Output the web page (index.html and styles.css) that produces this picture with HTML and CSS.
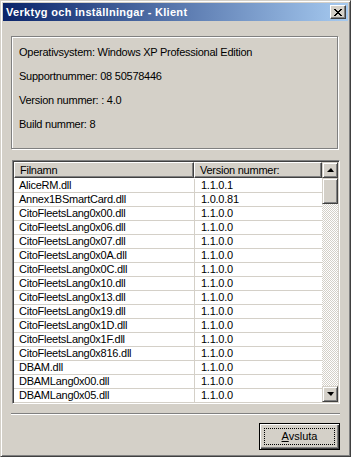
FILE: index.html
```html
<!DOCTYPE html>
<html lang="sv">
<head>
  <meta charset="utf-8">
  <title>Verktyg och inställningar - Klient</title>
  <link rel="stylesheet" href="styles.css">
</head>
<body>
  <div class="window">
    <div class="titlebar">
      <span class="title">Verktyg och inställningar - Klient</span>
      <button class="close" type="button">
        <svg width="8" height="7" viewBox="0 0 8 7">
          <path d="M0 0h2v1H0zM6 0h2v1H6zM1 1h2v1H1zM5 1h2v1H5zM2 2h4v1H2zM3 3h2v1H3zM2 4h4v1H2zM1 5h2v1H1zM5 5h2v1H5zM0 6h2v1H0zM6 6h2v1H6z" fill="#000"/>
        </svg>
      </button>
    </div>
    <div class="content">
      <div class="info">
        <p>Operativsystem: Windows XP Professional Edition</p>
        <p>Supportnummer: 08 50578446</p>
        <p>Version nummer: : 4.0</p>
        <p>Build nummer: 8</p>
      </div>

      <div class="listview">
        <div class="grid">
          <div class="head">
            <div class="col name">Filnamn</div>
            <div class="col ver">Version nummer:</div>
          </div>
          <div class="row"><div class="cell name">AliceRM.dll</div><div class="cell ver">1.1.0.1</div></div>
          <div class="row"><div class="cell name">Annex1BSmartCard.dll</div><div class="cell ver">1.0.0.81</div></div>
          <div class="row"><div class="cell name">CitoFleetsLang0x00.dll</div><div class="cell ver">1.1.0.0</div></div>
          <div class="row"><div class="cell name">CitoFleetsLang0x06.dll</div><div class="cell ver">1.1.0.0</div></div>
          <div class="row"><div class="cell name">CitoFleetsLang0x07.dll</div><div class="cell ver">1.1.0.0</div></div>
          <div class="row"><div class="cell name">CitoFleetsLang0x0A.dll</div><div class="cell ver">1.1.0.0</div></div>
          <div class="row"><div class="cell name">CitoFleetsLang0x0C.dll</div><div class="cell ver">1.1.0.0</div></div>
          <div class="row"><div class="cell name">CitoFleetsLang0x10.dll</div><div class="cell ver">1.1.0.0</div></div>
          <div class="row"><div class="cell name">CitoFleetsLang0x13.dll</div><div class="cell ver">1.1.0.0</div></div>
          <div class="row"><div class="cell name">CitoFleetsLang0x19.dll</div><div class="cell ver">1.1.0.0</div></div>
          <div class="row"><div class="cell name">CitoFleetsLang0x1D.dll</div><div class="cell ver">1.1.0.0</div></div>
          <div class="row"><div class="cell name">CitoFleetsLang0x1F.dll</div><div class="cell ver">1.1.0.0</div></div>
          <div class="row"><div class="cell name">CitoFleetsLang0x816.dll</div><div class="cell ver">1.1.0.0</div></div>
          <div class="row"><div class="cell name">DBAM.dll</div><div class="cell ver">1.1.0.0</div></div>
          <div class="row"><div class="cell name">DBAMLang0x00.dll</div><div class="cell ver">1.1.0.0</div></div>
          <div class="row"><div class="cell name">DBAMLang0x05.dll</div><div class="cell ver">1.1.0.0</div></div>
        </div>
        <div class="scrollbar">
          <div class="sbtn"><span class="arrow up"></span></div>
          <div class="thumb"></div>
          <div class="track"></div>
          <div class="sbtn"><span class="arrow down"></span></div>
        </div>
      </div>

      <div class="separator"></div>

      <div class="footer">
        <button class="btn" type="button"><span class="focus"><u>A</u>vsluta</span></button>
      </div>
    </div>
  </div>
</body>
</html>
```

FILE: styles.css
```css
body {
  margin: 0;
  font-family: "Liberation Sans", Arial, sans-serif;
  font-size: 11px;
  letter-spacing: -0.25px;
  color: #000;
}
.window {
  box-sizing: border-box;
  width: 351px;
  height: 457px;
  background: #d4d0c8;
  border: 1px solid;
  border-color: #d4d0c8 #404040 #404040 #d4d0c8;
  box-shadow: inset 1px 1px 0 #fff, inset -1px -1px 0 #808080;
  padding: 2px;
  display: flex;
  flex-direction: column;
}
.titlebar {
  height: 18px;
  background: linear-gradient(to right, #0a246a, #a6caf0);
  display: flex;
  align-items: center;
  justify-content: space-between;
  padding: 0 2px 0 3px;
}
.title {
  color: #fff;
  font-weight: bold;
  font-size: 11px;
  letter-spacing: 0.3px;
}
.close {
  box-sizing: border-box;
  width: 16px;
  height: 14px;
  padding: 0;
  background: #d4d0c8;
  border: 1px solid;
  border-color: #fff #404040 #404040 #fff;
  box-shadow: inset -1px -1px 0 #808080;
  display: flex;
  align-items: center;
  justify-content: center;
}
.content {
  flex: 1;
  display: flex;
  flex-direction: column;
  padding: 15px 8px 0 8px;
}
.info {
  box-sizing: border-box;
  height: 113px;
  border: 1px solid #808080;
  box-shadow: inset 1px 1px 0 #fff, 1px 1px 0 #fff;
  margin-right: 2px;
  padding: 9px 0 0 7px;
}
.info p {
  margin: 0;
  height: 24px;
  line-height: 13px;
}
.listview {
  box-sizing: border-box;
  height: 244px;
  margin: 11px 0 0 1px;
  border: 1px solid;
  border-color: #808080 #fff #fff #808080;
  box-shadow: inset 1px 1px 0 #404040, inset -1px -1px 0 #d4d0c8;
  padding: 1px;
  display: flex;
  background: #fff;
}
.grid {
  flex: 1;
  overflow: hidden;
}
.head {
  display: flex;
  height: 16px;
}
.col {
  box-sizing: border-box;
  background: #d4d0c8;
  border: 1px solid;
  border-color: #fff #404040 #404040 #fff;
  box-shadow: inset -1px -1px 0 #808080;
  padding: 1px 0 0 5px;
  line-height: 13px;
}
.col.name { width: 180px; }
.col.ver { flex: 1; }
.row {
  display: flex;
  height: 14px;
  border-bottom: 1px solid #d4d0c8;
  box-sizing: border-box;
}
.head + .row { height: 15px; padding-top: 1px; }
.cell {
  line-height: 13px;
  padding-left: 5px;
}
.cell.name {
  width: 175px;
  border-right: 1px solid #d4d0c8;
}
.cell.ver { flex: 1; padding-left: 6px; }
.scrollbar {
  width: 16px;
  display: flex;
  flex-direction: column;
}
.sbtn, .thumb {
  box-sizing: border-box;
  background: #d4d0c8;
  border: 1px solid;
  border-color: #d4d0c8 #404040 #404040 #d4d0c8;
  box-shadow: inset 1px 1px 0 #fff, inset -1px -1px 0 #808080;
}
.sbtn {
  height: 16px;
  display: flex;
  align-items: center;
  justify-content: center;
}
.thumb { height: 26px; }
.track {
  flex: 1;
  background: conic-gradient(#fff 25%, #d4d0c8 0 50%, #fff 0 75%, #d4d0c8 0);
  background-size: 2px 2px;
}
.arrow {
  width: 0;
  height: 0;
  border-left: 4px solid transparent;
  border-right: 3px solid transparent;
}
.arrow.up { border-bottom: 4px solid #000; }
.arrow.down { border-top: 4px solid #000; }
.separator {
  height: 1px;
  background: #808080;
  border-bottom: 1px solid #fff;
  margin: 9px 0 0 0;
}
.footer {
  display: flex;
  justify-content: flex-end;
  padding-top: 8px;
}
.btn {
  box-sizing: border-box;
  width: 81px;
  height: 27px;
  padding: 0;
  font: inherit;
  background: #d4d0c8;
  border: 1px solid #000;
  box-shadow: inset 1px 1px 0 #fff, inset -1px -1px 0 #404040, inset -2px -2px 0 #808080;
  display: flex;
  align-items: center;
  justify-content: center;
}
.focus {
  box-sizing: border-box;
  width: 71px;
  height: 17px;
  border: 1px dotted #000;
  line-height: 15px;
  text-align: center;
}
```
